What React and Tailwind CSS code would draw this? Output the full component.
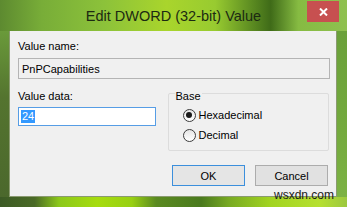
import React from 'react';

function Radio({ checked, label }) {
  return (
    <div className="flex items-center h-[20px]">
      <span className="w-[13px] h-[13px] rounded-full border border-[#3c3c3c] bg-[linear-gradient(#e6e6e6,#ffffff)] flex items-center justify-center">
        {checked && <span className="w-[6px] h-[6px] rounded-full bg-[#1a1a1a]" />}
      </span>
      <span className="ml-[3px] text-[11px] leading-[14px] text-black">{label}</span>
    </div>
  );
}

export default function App() {
  return (
    <div className="relative w-[347px] h-[207px] overflow-hidden flex flex-col font-['Liberation_Sans',Arial,sans-serif] select-none">
      {/* title bar */}
      <div className="relative h-[31px] shrink-0 flex items-center justify-center bg-[linear-gradient(90deg,#5d8a30_0%,#78ad38_12%,#8cc23a_30%,#a9d52c_48%,#98cb30_62%,#5f8f22_72%,#3f6b18_78%,#86bb42_86%,#8fc050_100%)]">
        <span className="text-[14.5px] leading-[18px] text-[#1c2a12] mt-[1px]">Edit DWORD (32-bit) Value</span>
        <div className="absolute right-[8px] top-[1px] w-[32px] h-[21px] bg-[#c75050] flex items-center justify-center">
          <svg width="9" height="8" viewBox="0 0 9 8">
            <path d="M1 0.5 L8 7.5 M8 0.5 L1 7.5" stroke="#ffffff" strokeWidth="2" />
          </svg>
        </div>
      </div>

      {/* middle */}
      <div className="flex h-[166px] shrink-0">
        <div className="w-[9px] bg-[linear-gradient(#6a9a3a,#54742f_40%,#4b682c)]" />
        <div className="w-[328px] bg-[#f0f0f0] border border-[#8a9a70] border-t-0 pl-[8px] pr-[7px] pt-[8px] flex flex-col text-[11px] text-black">
          <div className="leading-[14px]">Value name:</div>
          <div className="mt-[5px] h-[21px] w-[312px] border border-[#b4b4b4] bg-[#f0f0f0] flex items-center pl-[3px] leading-[14px]">
            PnPCapabilities
          </div>

          <div className="flex mt-[10px]">
            <div className="w-[138px] flex flex-col">
              <div className="leading-[14px]">Value data:</div>
              <div className="mt-[4px] h-[19px] border border-[#569de5] bg-white flex items-center pl-[2px]">
                <span className="bg-[#3399ff] text-white leading-[13px] px-[1px]">24</span>
              </div>
            </div>
            <div className="relative ml-[12px] mt-[4px] w-[162px] h-[58px] border border-[#dcdcdc] rounded-[2px] pl-[14px] pt-[11px]">
              <span className="absolute top-[-5px] left-[6px] bg-[#f0f0f0] px-[1px] leading-[14px]">Base</span>
              <Radio checked label="Hexadecimal" />
              <Radio label="Decimal" />
            </div>
          </div>

          <div className="flex justify-end gap-[10px] mt-[14px] pr-[1px]">
            <div className="w-[73px] h-[21px] border border-[#3c8fdc] bg-[#e5e5e5] flex items-center justify-center leading-[14px]">OK</div>
            <div className="w-[73px] h-[21px] border border-[#acacac] bg-[#e1e1e1] flex items-center justify-center leading-[14px]">Cancel</div>
          </div>
        </div>
        <div className="w-[10px] bg-[linear-gradient(#6aa03a,#74aa3e_60%,#7cb244)]" />
      </div>

      {/* bottom frame */}
      <div className="flex-1 bg-[linear-gradient(90deg,#3c5a25_0%,#4a6a26_10%,#8cc81a_17%,#a6dc0e_28%,#98d012_38%,#5a8a20_45%,#4a7a1e_58%,#78aa22_66%,#a2d420_78%,#b6e030_92%,#9cc840_100%)]" />

      <span className="absolute left-[274px] top-[189px] text-[12px] leading-[12px] text-[#1a1a1a]">wsxdn.com</span>
    </div>
  );
}
